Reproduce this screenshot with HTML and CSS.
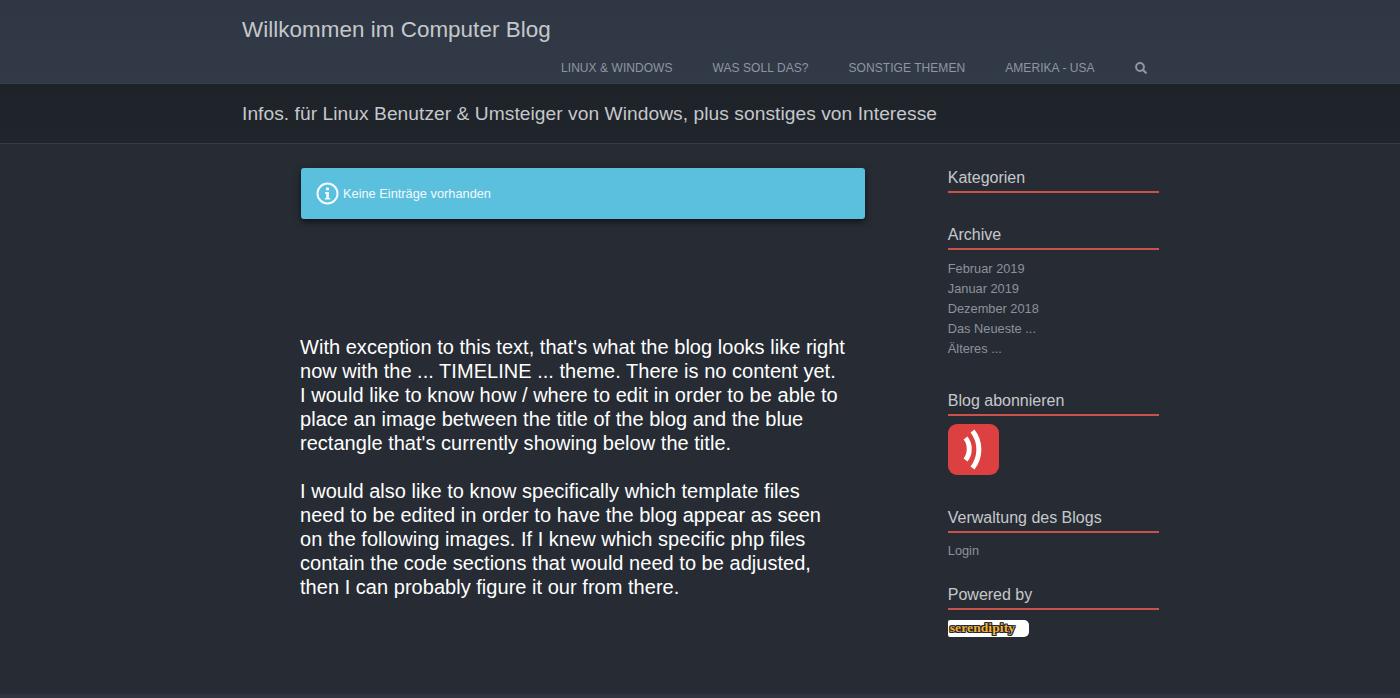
FILE: index.html
```html
<!DOCTYPE html>
<html lang="en">
<head>
    <meta charset="UTF-8">
    <meta name="viewport" content="width=device-width, initial-scale=1.0">
    <title>Willkommen im Computer Blog</title>
    <link rel="stylesheet" href="styles.css">
</head>
<body>
    <header class="site-header">
        <div class="wrap">
            <h1 class="site-title">Willkommen im Computer Blog</h1>
            <nav class="site-nav">
                <a href="#">LINUX &amp; WINDOWS</a>
                <a href="#">WAS SOLL DAS?</a>
                <a href="#">SONSTIGE THEMEN</a>
                <a href="#">AMERIKA - USA</a>
                <a href="#" class="search-link" aria-label="Suche">
                    <svg width="12" height="12" viewBox="0 0 12 12"><circle cx="5" cy="5" r="3.9" fill="none" stroke="currentColor" stroke-width="2"/><path d="M8 8L10.8 10.8" stroke="currentColor" stroke-width="2.2" stroke-linecap="round"/></svg>
                </a>
            </nav>
        </div>
    </header>

    <div class="subheader">
        <div class="wrap">
            <h2 class="tagline">Infos. für Linux Benutzer &amp; Umsteiger von Windows, plus sonstiges von Interesse</h2>
        </div>
    </div>

    <div class="wrap content">
        <main class="main-col">
            <div class="alert">
                <svg class="alert-icon" width="23" height="23" viewBox="0 0 23 23">
                    <circle cx="11.5" cy="11.5" r="10" fill="none" stroke="currentColor" stroke-width="2"/>
                    <circle cx="11.5" cy="6.9" r="1.7" fill="currentColor"/>
                    <path d="M9 9.9h3.9v6h1.3v1.7H8.9v-1.7h1.3v-4.2H9z" fill="currentColor"/>
                </svg>
                <span>Keine Einträge vorhanden</span>
            </div>
            <p class="note">With exception to this text, that's what the blog looks like right<br>now with the ... TIMELINE ... theme. There is no content yet.<br>I would like to know how / where to edit in order to be able to<br>place an image between the title of the blog and the blue<br>rectangle that's currently showing below the title.</p>
            <p class="note">I would also like to know specifically which template files<br>need to be edited in order to have the blog appear as seen<br>on the following images. If I knew which specific php files<br>contain the code sections that would need to be adjusted,<br>then I can probably figure it our from there.</p>
        </main>

        <aside class="sidebar">
            <section class="widget widget-cat">
                <h3>Kategorien</h3>
            </section>
            <section class="widget widget-archive">
                <h3>Archive</h3>
                <ul>
                    <li><a href="#">Februar 2019</a></li>
                    <li><a href="#">Januar 2019</a></li>
                    <li><a href="#">Dezember 2018</a></li>
                    <li><a href="#">Das Neueste ...</a></li>
                    <li><a href="#">Älteres ...</a></li>
                </ul>
            </section>
            <section class="widget widget-feed">
                <h3>Blog abonnieren</h3>
                <a href="#" class="feed-icon" aria-label="Feed">
                    <svg width="51" height="51" viewBox="0 0 51 51">
                        <rect width="51" height="51" rx="9" fill="#dc4040"/>
                        <path d="M17.5 14C22.5 20 22.5 30 17.5 36" fill="none" stroke="#fff" stroke-width="5"/>
                        <path d="M24.5 7C33 18 33 33 24.5 44" fill="none" stroke="#fff" stroke-width="5"/>
                    </svg>
                </a>
            </section>
            <section class="widget widget-admin">
                <h3>Verwaltung des Blogs</h3>
                <ul>
                    <li><a href="#">Login</a></li>
                </ul>
            </section>
            <section class="widget widget-powered">
                <h3>Powered by</h3>
                <a href="#" class="s9y-badge"><span>serendipity</span></a>
            </section>
        </aside>
    </div>

    <footer class="site-footer"></footer>
</body>
</html>
```

FILE: styles.css
```css
html, body {
    margin: 0;
    padding: 0;
}
body {
    height: 698px;
    overflow: hidden;
    position: relative;
    background: #272c34;
    font-family: "Liberation Sans", Arial, sans-serif;
}
a {
    text-decoration: none;
    color: inherit;
}
.wrap {
    width: 917px;
    margin-left: 242px;
}
.site-header {
    height: 83px;
    background: linear-gradient(#2f3744, #323a48);
    border-bottom: 1px solid #36424a;
}
.site-title {
    margin: 0;
    padding-top: 16px;
    font-size: 22.4px;
    letter-spacing: 0.05px;
    line-height: 27px;
    font-weight: normal;
    color: #c5c8cb;
}
.site-nav {
    display: flex;
    margin-top: 18px;
    padding-left: 319px;
    gap: 40px;
    font-size: 12px;
    letter-spacing: 0.06px;
    line-height: 14px;
    color: #8f96a0;
}
.search-link {
    display: flex;
    align-items: center;
}
.subheader {
    height: 59px;
    background: linear-gradient(#1e2229, #20242b);
    border-bottom: 1px solid #363c45;
}
.tagline {
    margin: 0;
    padding-top: 19px;
    font-size: 19.2px;
    letter-spacing: 0.05px;
    line-height: 22px;
    font-weight: normal;
    color: #c5c8cb;
}
.content {
    display: flex;
}
.main-col {
    width: 565px;
    margin-left: 59px;
    padding-top: 24px;
}
.alert {
    display: flex;
    align-items: center;
    gap: 4px;
    height: 51px;
    box-sizing: border-box;
    padding-left: 15px;
    border-radius: 3px;
    background: #5bc0de;
    box-shadow: 0 3px 7px rgba(0,0,0,0.6);
    color: #f2fafd;
    font-size: 12.8px;
}
.note {
    margin: 0 0 24px -1px;
    font-size: 20px;
    letter-spacing: 0.03px;
    line-height: 24px;
    color: #fff;
}
.alert + .note {
    margin-top: 116px;
}
.sidebar {
    width: 211.5px;
    margin-left: 82.5px;
    padding-top: 24px;
}
.widget h3 {
    margin: 0;
    padding-bottom: 3px;
    border-bottom: 2px solid #c9534a;
    font-size: 16px;
    line-height: 20px;
    font-weight: normal;
    color: #c5c8cb;
}
.widget ul {
    list-style: none;
    margin: 8px 0 0;
    padding: 0;
    font-size: 12.8px;
    line-height: 20px;
    color: #8c929b;
}
.widget-cat {
    margin-bottom: 32px;
}
.widget-archive {
    margin-bottom: 32px;
}
.widget-archive ul {
    margin-top: 9px;
}
.widget-feed {
    margin-bottom: 33px;
}
.widget-admin {
    margin-bottom: 24px;
}
.feed-icon {
    display: block;
    margin-top: 8px;
    height: 51px;
}
.feed-icon svg {
    display: block;
}
.s9y-badge {
    display: block;
    width: 81px;
    height: 17px;
    margin-top: 10px;
    background: #fff;
    border-radius: 2px 5px 5px 2px;
    overflow: hidden;
}
.s9y-badge span {
    display: block;
    padding-left: 2px;
    color: #f0b429;
    font-family: "Liberation Serif", serif;
    font-weight: bold;
    font-size: 13.5px;
    letter-spacing: 0.1px;
    line-height: 16px;
    text-shadow: 1px 0 #23233a, -1px 0 #23233a, 0 1px #23233a, 0 -1px #23233a, 1px 1px #23233a, -1px -1px #23233a, 1px -1px #23233a, -1px 1px #23233a;
}
.site-footer {
    position: absolute;
    left: 0;
    right: 0;
    bottom: 0;
    height: 4px;
    background: #2f353e;
}
```
